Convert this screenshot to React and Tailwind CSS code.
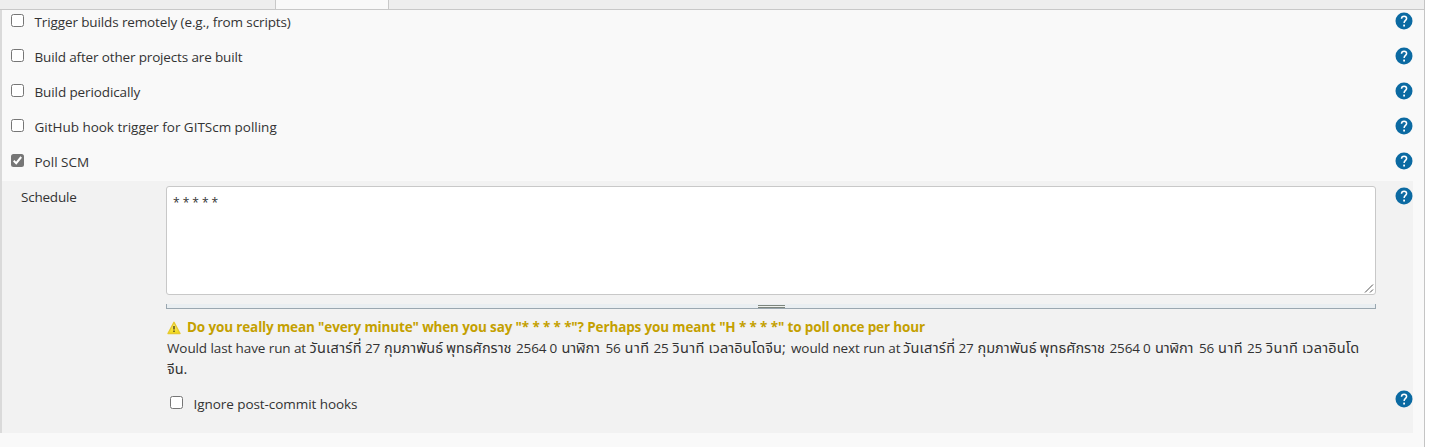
function HelpIcon() {
  return (
    <svg className="block size-[18px] shrink-0" viewBox="0 0 18 18" role="img" aria-label="Help">
      <circle cx="9" cy="9" r="8.5" fill="#0b6aa2" />
      <path
        d="M6.5 6.8C6.5 5.2 7.5 4.2 9.1 4.2S11.6 5.2 11.6 6.5C11.6 8.2 9.1 8.6 9.1 10.9"
        fill="none"
        stroke="#fff"
        strokeWidth="1.5"
      />
      <rect x="8.2" y="12.6" width="1.8" height="1.9" fill="#fff" />
    </svg>
  );
}

function Checkbox({ checked = false }) {
  return (
    <span
      role="checkbox"
      aria-checked={checked}
      className={
        checked
          ? "block size-[13px] shrink-0 rounded-[2.5px] bg-[#767676]"
          : "block size-[13px] shrink-0 rounded-[2.5px] border border-[#767676] bg-white"
      }
    >
      {checked && (
        <svg className="block size-[13px]" viewBox="0 0 13 13">
          <path d="M2.7 6.8L5.2 9.2L10.2 3" fill="none" stroke="#fff" strokeWidth="2" />
        </svg>
      )}
    </span>
  );
}

function WarningIcon() {
  return (
    <svg className="mt-[5px] block h-[14px] w-[15px] shrink-0" viewBox="0 0 15 14">
      <defs>
        <linearGradient id="warn" x1="0" y1="0" x2="0" y2="1">
          <stop offset="0" stopColor="#fbf08a" />
          <stop offset="1" stopColor="#f3da14" />
        </linearGradient>
      </defs>
      <path d="M8 1.3L14 12.5H2Z" fill="url(#warn)" stroke="#e6c92e" strokeWidth="1.4" strokeLinejoin="round" />
      <path d="M8 5V8.6M8 9.6V11" stroke="#5c5520" strokeWidth="1.6" />
    </svg>
  );
}

const triggers = [
  { label: "Trigger builds remotely (e.g., from scripts)", spacing: "tracking-[-0.12px]" },
  { label: "Build after other projects are built", spacing: "tracking-[-0.15px]" },
  { label: "Build periodically", spacing: "tracking-[-0.11px]" },
  { label: "GitHub hook trigger for GITScm polling", spacing: "tracking-[-0.02px]" },
  { label: "Poll SCM", spacing: "tracking-normal", checked: true },
];

const latin = "tracking-[-0.1px]";
const thai = "text-[14.5px] ";

const dateWords = [
  { text: "วันเสาร์ที่ ", style: thai + "w-[55.5px] tracking-[0.3px]" },
  { text: "27 ", style: latin + " w-[19px]" },
  { text: "กุมภาพันธ์ ", style: thai + "w-[62px]" },
  { text: "พุทธศักราช ", style: thai + "w-[70px]" },
  { text: "2564 ", style: latin + " w-[33.5px]" },
  { text: "0 ", style: latin + " w-[12px]" },
  { text: "นาฬิกา ", style: thai + "w-[44px] tracking-[-0.1px]" },
  { text: "56 ", style: latin + " w-[19px]" },
  { text: "นาที ", style: thai + "w-[29px] tracking-[0.5px]" },
  { text: "25 ", style: latin + " w-[19px]" },
  { text: "วินาที ", style: thai + "w-[36px] tracking-[0.4px]" },
];

function DateWords() {
  return dateWords.map((w) => (
    <span key={w.text} className={"shrink-0 " + w.style}>
      {w.text}
    </span>
  ));
}

export default function App() {
  return (
    <div className="flex h-[447px] w-[1444px] overflow-hidden bg-white font-['Open_Sans','Noto_Sans','Noto_Sans_Thai',sans-serif] text-[13.5px] leading-[21px] text-[#333]">
      <div className="flex w-[1425px] flex-col border-r border-[#c4c4c4] bg-[#f9f9f9]">
        <div className="flex h-[10px] shrink-0">
          <div className="w-[275px] border-b border-[#c8c8c8] bg-[#eee]" />
          <div className="w-[114px] border-x border-b border-[#c8c8c8] bg-[#f9f9f9]" />
          <div className="flex-1 border-b border-[#c8c8c8] bg-[#eee]" />
        </div>
        <div className="flex h-[423px] flex-col border-l-2 border-[#dadada]">
          <div className="h-[171px]">
            {triggers.map((t) => (
              <label key={t.label} className="flex h-[35px] items-start pr-[11px] pl-[9px]">
                <span className="mt-1">
                  <Checkbox checked={t.checked} />
                </span>
                <span className={"mt-[2px] ml-[10.5px] flex-1 whitespace-nowrap " + t.spacing}>{t.label}</span>
                <span className="mt-[2px]">
                  <HelpIcon />
                </span>
              </label>
            ))}
          </div>
          <div className="flex h-[252px] w-[1411px] items-start bg-[#f2f2f2]">
            <div className="mt-[6px] w-[164px] shrink-0 pl-[19px] tracking-[-0.22px]">Schedule</div>
            <div className="w-[1210px] shrink-0 pt-[5px]">
              <div className="flex h-[109px] flex-col justify-between rounded-[3px] border border-[#c8c8c8] bg-white">
                <div className="pt-[6px] pl-[6px] text-[12px] leading-[20px] tracking-[-0.05px]">* * * * *</div>
                <svg className="mr-px mb-px block size-[10px] self-end" viewBox="0 0 10 10">
                  <path d="M1 9.5L9 1.5M6 9.5L9 6.5" stroke="#555" strokeWidth="1" />
                </svg>
              </div>
              <div className="mt-[9px] flex h-[5px] items-end justify-center border-x border-b border-[#9aa7b0] bg-[#e9eef1]">
                <div className="h-[3px] w-[27px] border-y border-[#7d857d] bg-[#eef0ee]" />
              </div>
              <div className="mt-[7px] flex h-[21px]">
                <WarningIcon />
                <span className="mt-px ml-[6px] font-bold tracking-[-0.14px] whitespace-nowrap text-[#c4a000]">
                  Do you really mean "every minute" when you say "* * * * *"? Perhaps you meant "H * * * *" to poll once per hour
                </span>
              </div>
              <div className="pl-px whitespace-pre">
                <div className="flex h-[21px] items-baseline">
                  <span className={"w-[142.5px] shrink-0 " + latin}>{"Would last have run at "}</span>
                  <DateWords />
                  <span className="w-[82.5px] shrink-0 text-[14.5px] tracking-[0.1px]">{"เวลาอินโดจีน; "}</span>
                  <span className={"w-[112px] shrink-0 " + latin}>{"would next run at "}</span>
                  <DateWords />
                  <span className="shrink-0 text-[14.5px] tracking-[0.2px]">เวลาอินโด</span>
                </div>
                <div className="h-[21px] text-[14.5px]">จีน.</div>
              </div>
              <label className="mt-[15px] flex items-start pl-1">
                <span className="mt-[2px]">
                  <Checkbox />
                </span>
                <span className="ml-[10.5px] tracking-[-0.06px]">Ignore post-commit hooks</span>
              </label>
            </div>
            <div className="flex h-[252px] flex-1 flex-col items-end justify-between pt-[6px] pr-0 pb-[25px]">
              <HelpIcon />
              <HelpIcon />
            </div>
          </div>
        </div>
      </div>
    </div>
  );
}
